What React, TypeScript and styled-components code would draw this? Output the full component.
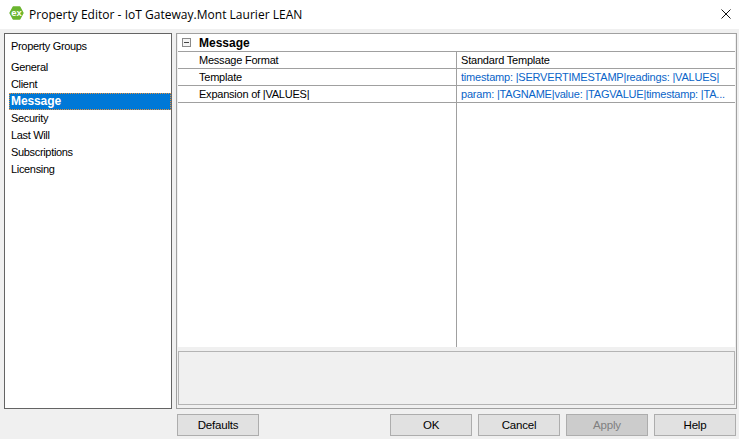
import React from "react";
import styled, { createGlobalStyle } from "styled-components";

const Global = createGlobalStyle`
  html, body { margin: 0; padding: 0; background: #f0f0f0; }
  body { font-family: "Liberation Sans", Arial, sans-serif; font-size: 11px; color: #000; }
`;

const Dialog = styled.div`
  width: 739px;
  height: 439px;
  display: flex;
  flex-direction: column;
  overflow: hidden;
  background: #f0f0f0;
`;

const TitleBar = styled.div`
  height: 29px;
  background: #fff;
  display: flex;
  align-items: center;
  padding: 0 8px 1px 9px;
  box-sizing: border-box;
  flex: none;
`;

const Title = styled.div`
  margin-left: 5px;
  font-family: "Open Sans", sans-serif;
  font-size: 12px;
  letter-spacing: 0.02px;
  flex: 1;
  white-space: nowrap;
`;

const Body = styled.div`
  display: flex;
  gap: 4px;
  padding: 4px 2px 0 4px;
  height: 380px;
  box-sizing: border-box;
  flex: none;
`;

const GroupList = styled.div`
  width: 168px;
  border: 1px solid #646464;
  background: #fff;
  box-sizing: border-box;
  padding: 4px 0 0 4px;
  flex: none;
  letter-spacing: -0.33px;
`;

const ListHeading = styled.div`
  height: 17px;
  line-height: 16px;
  padding-left: 2px;
  margin-bottom: 4px;
`;

const GroupItem = styled.div<{ $active?: boolean }>`
  height: 17px;
  line-height: 16px;
  padding-left: 2px;
  box-sizing: border-box;
  white-space: nowrap;
  ${(p) =>
    p.$active &&
    `background: #0078d7; color: #fff; font-weight: bold; font-size: 12px; letter-spacing: -0.1px; border: 1px dotted #e8913a; padding-left: 1px; line-height: 15px;`}
`;

const RightPanel = styled.div`
  flex: 1;
  border: 1px solid #a0a0a0;
  box-sizing: border-box;
  display: flex;
  flex-direction: column;
  background: #f0f0f0;
  padding: 0 1px 2px 1px;
`;

const Grid = styled.div`
  height: 313px;
  background: #fff;
  flex: none;
  display: flex;
  flex-direction: column;
`;

const CategoryRow = styled.div`
  height: 18px;
  flex: none;
  display: flex;
  align-items: center;
  border-bottom: 1px solid #a0a0a0;
  box-sizing: border-box;
  padding-left: 4px;
  font-weight: bold;
  font-size: 12px;
`;

const Expander = styled.span`
  width: 9px;
  height: 9px;
  border: 1px solid #8a8a8a;
  background: #f4f4f4;
  box-sizing: border-box;
  position: relative;
  margin-right: 8px;
  flex: none;
  &::after {
    content: "";
    position: absolute;
    left: 1px;
    top: 3px;
    width: 5px;
    height: 1px;
    background: #444;
  }
`;

const Row = styled.div`
  height: 17px;
  flex: none;
  display: grid;
  grid-template-columns: 279px 1fr;
  border-bottom: 1px solid #a0a0a0;
  box-sizing: border-box;
`;

const NameCell = styled.div`
  padding-left: 21px;
  line-height: 16px;
  border-right: 1px solid #a0a0a0;
  white-space: nowrap;
  letter-spacing: -0.22px;
`;

const ValueCell = styled.div<{ $link?: boolean }>`
  padding-left: 4px;
  line-height: 16px;
  white-space: nowrap;
  overflow: hidden;
  letter-spacing: -0.2px;
  color: ${(p) => (p.$link ? "#0a64c8" : "#000")};
`;

const EmptyArea = styled.div`
  flex: 1;
  display: grid;
  grid-template-columns: 279px 1fr;
`;

const EmptyName = styled.div`
  border-right: 1px solid #a0a0a0;
`;

const HelpBox = styled.div`
  margin-top: 4px;
  height: 54px;
  flex: none;
  box-sizing: border-box;
  border: 1px solid #b4b4b4;
  background: #f0f0f0;
`;

const Footer = styled.div`
  display: flex;
  padding: 5px 3px 0 177px;
`;

const Btn = styled.div<{ $disabled?: boolean }>`
  width: 82px;
  height: 22px;
  box-sizing: border-box;
  border: 1px solid #adadad;
  background: ${(p) => (p.$disabled ? "#cccccc" : "#e1e1e1")};
  color: ${(p) => (p.$disabled ? "#7f7f7f" : "#000")};
  display: flex;
  align-items: center;
  justify-content: center;
  font-size: 11.5px;
  letter-spacing: -0.2px;
  & + & {
    margin-left: 6px;
  }
`;

const Spacer = styled.div`
  flex: 1;
`;

const LogoSvg = styled.svg`
  flex: none;
  margin-top: -2px;
`;

const CloseSvg = styled.svg`
  flex: none;
  margin-top: -1px;
`;

const Logo = () => (
  <LogoSvg width="15" height="14" viewBox="0 0 15 14">
    <path d="M4.2 1 H10.8 L14 7 L10.8 13 H4.2 L1 7 Z" fill="#6bb52f" stroke="#6bb52f" strokeWidth="1.4" strokeLinejoin="round" />
    <text x="7.5" y="10.2" textAnchor="middle" fontFamily="Liberation Sans" fontWeight="bold" fontSize="9.5" fill="#fff">ex</text>
  </LogoSvg>
);

const Close = () => (
  <CloseSvg width="10" height="10" viewBox="0 0 10 10">
    <path d="M0.5 0.5 L9.5 9.5 M9.5 0.5 L0.5 9.5" stroke="#111" strokeWidth="1" fill="none" />
  </CloseSvg>
);

const groups = ["General", "Client", "Message", "Security", "Last Will", "Subscriptions", "Licensing"];

export default function App() {
  return (
    <Dialog>
      <Global />
      <TitleBar>
        <Logo />
        <Title>Property Editor - IoT Gateway.Mont Laurier LEAN</Title>
        <Close />
      </TitleBar>
      <Body>
        <GroupList>
          <ListHeading>Property Groups</ListHeading>
          {groups.map((g) => (
            <GroupItem key={g} $active={g === "Message"}>{g}</GroupItem>
          ))}
        </GroupList>
        <RightPanel>
          <Grid>
            <CategoryRow>
              <Expander />
              Message
            </CategoryRow>
            <Row>
              <NameCell>Message Format</NameCell>
              <ValueCell>Standard Template</ValueCell>
            </Row>
            <Row>
              <NameCell>Template</NameCell>
              <ValueCell $link>timestamp: |SERVERTIMESTAMP|readings: |VALUES|</ValueCell>
            </Row>
            <Row>
              <NameCell>Expansion of |VALUES|</NameCell>
              <ValueCell $link>param: |TAGNAME|value: |TAGVALUE|timestamp: |TA...</ValueCell>
            </Row>
            <EmptyArea>
              <EmptyName />
              <div />
            </EmptyArea>
          </Grid>
          <HelpBox />
        </RightPanel>
      </Body>
      <Footer>
        <Btn>Defaults</Btn>
        <Spacer />
        <Btn>OK</Btn>
        <Btn>Cancel</Btn>
        <Btn $disabled>Apply</Btn>
        <Btn>Help</Btn>
      </Footer>
    </Dialog>
  );
}
